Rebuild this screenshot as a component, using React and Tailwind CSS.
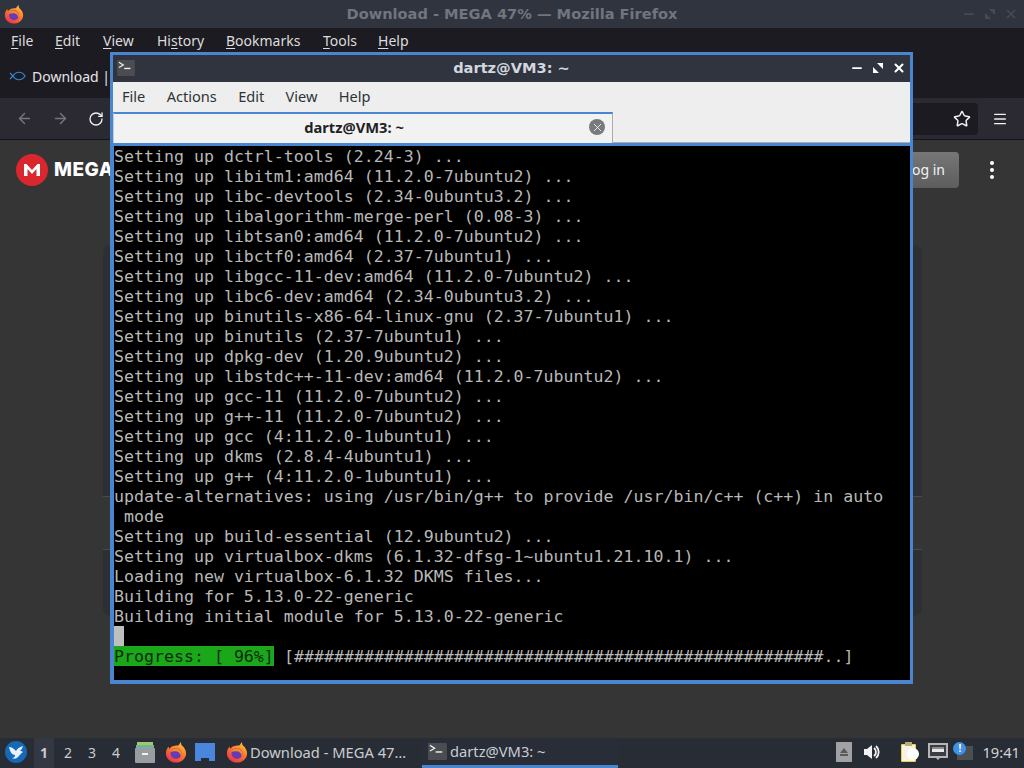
import React from "react";
import { ArrowLeft, ArrowRight, RotateCw, Star, Menu, Minus, X } from "lucide-react";

const lines = [
  "Setting up dctrl-tools (2.24-3) ...",
  "Setting up libitm1:amd64 (11.2.0-7ubuntu2) ...",
  "Setting up libc-devtools (2.34-0ubuntu3.2) ...",
  "Setting up libalgorithm-merge-perl (0.08-3) ...",
  "Setting up libtsan0:amd64 (11.2.0-7ubuntu2) ...",
  "Setting up libctf0:amd64 (2.37-7ubuntu1) ...",
  "Setting up libgcc-11-dev:amd64 (11.2.0-7ubuntu2) ...",
  "Setting up libc6-dev:amd64 (2.34-0ubuntu3.2) ...",
  "Setting up binutils-x86-64-linux-gnu (2.37-7ubuntu1) ...",
  "Setting up binutils (2.37-7ubuntu1) ...",
  "Setting up dpkg-dev (1.20.9ubuntu2) ...",
  "Setting up libstdc++-11-dev:amd64 (11.2.0-7ubuntu2) ...",
  "Setting up gcc-11 (11.2.0-7ubuntu2) ...",
  "Setting up g++-11 (11.2.0-7ubuntu2) ...",
  "Setting up gcc (4:11.2.0-1ubuntu1) ...",
  "Setting up dkms (2.8.4-4ubuntu1) ...",
  "Setting up g++ (4:11.2.0-1ubuntu1) ...",
  "update-alternatives: using /usr/bin/g++ to provide /usr/bin/c++ (c++) in auto",
  " mode",
  "Setting up build-essential (12.9ubuntu2) ...",
  "Setting up virtualbox-dkms (6.1.32-dfsg-1~ubuntu1.21.10.1) ...",
  "Loading new virtualbox-6.1.32 DKMS files...",
  "Building for 5.13.0-22-generic",
  "Building initial module for 5.13.0-22-generic",
];

function FirefoxIcon({ size = 20, id }) {
  return (
    <svg width={size} height={size} viewBox="0 0 24 24">
      <defs>
        <linearGradient id={id} x1="0.8" y1="0" x2="0.2" y2="1">
          <stop offset="0" stopColor="#ffc43a" />
          <stop offset="0.45" stopColor="#ff7a2a" />
          <stop offset="1" stopColor="#e8304f" />
        </linearGradient>
      </defs>
      <path d="M17 1c1 2 .6 3 1.5 4C21 7 23 10 23 13.500C23 19 18 23.500 12 23.500S1 19 1 13.500C1 10 2.500 7.500 4 6c0 1 .3 2 1 2.500C7 5 12 5 14 5c1.500-1 2.500-2.500 3-4z" fill={`url(#${id})`} />
      <circle cx="12" cy="13.500" r="6" fill="#6a3bb0" />
      <path d="M6 12c1-3 4-4.500 7-4 3 .5 5 3 5 6 0 1-.3 2-.8 3-.2-3-2-5.500-5.200-5.800C10 11 8 11 6 12z" fill="#f58a2d" />
    </svg>
  );
}

function TerminalIcon({ className }) {
  return (
    <svg className={className} viewBox="0 0 20 18">
      <rect width="20" height="18" rx="1" fill="#4b4d50" />
      <path d="M2 2.500l5 3-5 3" fill="none" stroke="#f2f2f2" strokeWidth="1.300" />
      <path d="M8 9.500h7" stroke="#f2f2f2" strokeWidth="1.500" />
    </svg>
  );
}

function U({ children }) {
  return <span className="underline underline-offset-2">{children}</span>;
}

function TerminalWindow() {
  return (
    <div className="absolute left-[110px] top-[52px] w-[803px] h-[632px] border-[3px] border-[#4a86cf] flex flex-col bg-black">
      <div className="h-[27px] shrink-0 bg-[#2f343f] grid grid-cols-[1fr_auto_1fr] items-center pl-[4px] pr-[4px] pb-[2px]">
        <TerminalIcon className="w-[18px] h-[16px]" />
        <span className="font-['DejaVu_Sans'] font-bold text-[14.6px] text-[#d3d7de]">dartz@VM3: ~</span>
        <div className="flex justify-end items-center gap-[7px] text-white">
          <Minus size={14} strokeWidth={3} />
          <svg width="14" height="14" viewBox="0 0 14 14">
            <path d="M6 2h6v6zM8 12H2V6z" fill="#fff" />
          </svg>
          <X size={14} strokeWidth={3.500} />
        </div>
      </div>
      <div className="h-[30px] shrink-0 bg-[#eeeeee] flex items-center font-['Noto_Sans'] text-[14.6px] text-[#2e3436] pl-[9px] gap-[21.300px]">
        <span>File</span>
        <span>Actions</span>
        <span>Edit</span>
        <span>View</span>
        <span>Help</span>
      </div>
      <div className="h-[31px] shrink-0 bg-[#eeeeee] flex items-stretch">
        <div className="w-[500px] border-t-2 border-[#4a86cf] border-r border-r-[#a9adb3] border-l border-l-[#c5ccd5] bg-[#f2f2f2] flex items-center relative justify-center pb-[3px]">
          <span className="font-['Noto_Sans'] font-bold text-[14.7px] text-[#1f2225] mr-[18px]">dartz@VM3: ~</span>
          <span className="absolute right-[7px] top-[5px] w-[16px] h-[16px] rounded-full bg-[#777b7d] flex items-center justify-center text-white">
            <X size={13} strokeWidth={1.500} />
          </span>
        </div>
        <div className="flex-1 border-b border-[#a9adb3]" />
      </div>
      <div className="flex-1 min-h-0 border-t-[3px] border-l border-b border-[#4a86cf] bg-black font-['DejaVu_Sans_Mono'] text-[16.6px] leading-[22px] text-[#b8b8b8] whitespace-pre overflow-hidden">
        {lines.map((l, i) => (
          <div key={i} className="h-[20px]">{l}</div>
        ))}
        <div className="h-[20px]">
          <span className="block w-[10px] h-[20px] bg-[#bfbfbf]" />
        </div>
        <div className="h-[20px] flex">
          <span className="w-[160px] h-[20px] bg-[#1aa81a] text-[#0a2a0a]">Progress: [ 96%]</span>
          <span>{" [#####################################################..]"}</span>
        </div>
      </div>
    </div>
  );
}

function Taskbar() {
  return (
    <div className="h-[30px] shrink-0 bg-[#282c34] flex items-center font-['Noto_Sans'] text-[14.7px] text-[#c9ccd1] relative">
      <div className="w-[32px] flex justify-center pb-[2px]">
        <svg width="24" height="24" viewBox="0 0 24 24">
          <circle cx="12" cy="12" r="11" fill="#1668b8" />
          <path d="M5 7c3 0 5 2 7 4 1-2 3-4 7-5-1 3-2 4-3 5 1 0 2 0 3 1-2 1-3 3-5 5-2 2-4 2-6 1 2 0 3-1 3-3-3 0-5-3-6-8z" fill="#e8f2fb" />
        </svg>
      </div>
      <div className="flex items-center h-[30px] ml-[2px] text-[14px]">
        <span className="w-[20px] h-[30px] pb-[2px] bg-[#343842] flex items-center justify-center font-bold">1</span>
        <span className="w-[24px] ml-[2px] pb-[2px] text-center">2</span>
        <span className="w-[24px] pb-[2px] text-center">3</span>
        <span className="w-[24px] pb-[2px] text-center">4</span>
      </div>
      <div className="ml-[6px] w-[22px] h-[22px] mb-[3px]">
        <svg width="22" height="22" viewBox="0 0 22 22">
          <rect x="3" y="1" width="16" height="4" fill="#a9c667" />
          <rect x="2" y="4" width="18" height="3" fill="#6fb3a0" />
          <rect x="1" y="7" width="20" height="15" rx="1" fill="#9a9d9f" />
          <rect x="8" y="12" width="6" height="2" fill="#f2f2f2" />
        </svg>
      </div>
      <div className="ml-[9px] pb-[2px]"><FirefoxIcon size={22} id="ffa" /></div>
      <div className="ml-[7px] pb-[2px]">
        <svg width="22" height="20" viewBox="0 0 22 20">
          <path d="M1 1h20v18h-6v-3H7v3H1z" fill="#4a86dd" />
        </svg>
      </div>
      <div className="ml-[10px] flex items-center w-[196px] pb-[2px]">
        <FirefoxIcon size={22} id="ffb" />
        <span className="ml-[2px]">Download - MEGA 47…</span>
      </div>
      <div className="w-[196px] h-[30px] flex items-center border-b-[3px] border-[#4a86cf] pl-[6px] bg-[#282d38]">
        <TerminalIcon className="w-[19px] h-[17px]" />
        <span className="ml-[3px]">dartz@VM3: ~</span>
      </div>
      <div className="flex-1 flex items-center justify-end pr-[4px] pb-[2px]">
        <div className="w-[16px] h-[20px] bg-[#a2a2a4] flex items-center justify-center">
          <svg width="10" height="8" viewBox="0 0 10 8"><path d="M5 0l4 5H1zM1 6h8v2H1z" fill="#5a5a5a" /></svg>
        </div>
        <svg className="ml-[11px]" width="18" height="18" viewBox="0 0 18 18">
          <path d="M1 6h3l5-4v14l-5-4H1z" fill="#f2f2f2" />
          <path d="M11 5a5 5 0 010 8M13 3a8 8 0 010 12" fill="none" stroke="#f2f2f2" strokeWidth="1.800" />
        </svg>
        <svg className="ml-[19px]" width="20" height="22" viewBox="0 0 20 22">
          <rect x="1" y="3" width="15" height="18" rx="1" fill="#e8cf58" />
          <rect x="2" y="4" width="13" height="16" fill="#f7f3df" />
          <rect x="5" y="1" width="7" height="4" fill="#b9ad7c" />
          <circle cx="13" cy="13" r="6" fill="#ffffff" />
        </svg>
        <svg className="ml-[8px]" width="20" height="20" viewBox="0 0 20 20">
          <rect x="1" y="2" width="18" height="13" fill="#3a3d42" stroke="#b5b5b5" strokeWidth="2" />
          <path d="M7 15l3 3 3-3z" fill="#b5b5b5" />
          <path d="M4 5h12v5H4z" fill="#e6e6e6" />
          <path d="M5 5v2M7 5v2M9 5v2M11 5v2M13 5v2M15 5v2" stroke="#333" strokeWidth="1" />
        </svg>
        <div className="ml-[5px] relative w-[20px] h-[20px]">
          <div className="absolute right-0 bottom-[2px] w-[16px] h-[14px] bg-[#4a4f52]" />
          <div className="absolute left-0 top-0 w-[13px] h-[13px] rounded-full bg-[#3f92e6] flex items-center justify-center text-white text-[10px] font-bold leading-none">!</div>
        </div>
        <span className="ml-[9px] text-[#d0d3d8]">19:41</span>
      </div>
    </div>
  );
}

export default function App() {
  return (
    <div className="w-[1024px] h-[768px] relative overflow-hidden flex flex-col bg-[#353535]">
      <div className="h-[28px] shrink-0 bg-[#2f343f] grid grid-cols-[1fr_auto_1fr] items-center px-[4px]">
        <FirefoxIcon size={20} id="fft" />
        <span className="font-['DejaVu_Sans'] font-bold text-[14.6px] text-[#70757f]">Download - MEGA 47% — Mozilla Firefox</span>
        <div className="flex justify-end items-center gap-[7px] text-[#454a55] pr-[2px]">
          <Minus size={14} strokeWidth={3} />
          <svg width="14" height="14" viewBox="0 0 14 14"><path d="M6 2h6v6zM8 12H2V6z" fill="#454a55" /></svg>
          <X size={14} strokeWidth={3} />
        </div>
      </div>
      <div className="h-[26px] shrink-0 bg-[#1c1b22] flex items-center font-['Noto_Sans'] text-[14px] text-[#dcdcde] pl-[11px] pb-[2px]">
        <span className="w-[44px]"><U>F</U>ile</span>
        <span className="w-[48px]"><U>E</U>dit</span>
        <span className="w-[54px]"><U>V</U>iew</span>
        <span className="w-[69px]">Hi<U>s</U>tory</span>
        <span className="w-[97px]"><U>B</U>ookmarks</span>
        <span className="w-[55px]"><U>T</U>ools</span>
        <span><U>H</U>elp</span>
      </div>
      <div className="h-[44px] shrink-0 bg-[#1c1b22] flex items-center pl-[9px] font-['Noto_Sans'] text-[14px] text-[#e6e6e8]">
        <svg width="17" height="10" viewBox="0 0 17 10">
          <path d="M1 2l3 3-3 3M4 5c3-5 9-5 12 0-3 5-9 5-12 0z" fill="none" stroke="#3a86cf" strokeWidth="1.200" />
        </svg>
        <span className="ml-[6px]">Download |</span>
      </div>
      <div className="h-[42px] shrink-0 bg-[#2b2a33] border-b border-[#15141a] flex items-center pl-[16px] pr-[16px] text-[#f2f2f2]">
        <ArrowLeft size={17} className="text-[#77767d]" />
        <ArrowRight size={17} className="ml-[19px] text-[#77767d]" />
        <RotateCw size={16} className="ml-[19px]" />
        <div className="flex-1 ml-[12px] h-[32px] bg-[#1c1b22] rounded-[4px] flex items-center justify-end pr-[7px]">
          <Star size={18} />
        </div>
        <Menu size={16} className="ml-[14px]" />
      </div>
      <div className="flex-1 min-h-0 pt-[12px]">
        <div className="flex items-center justify-between h-[36px] pl-[16px] pr-[30px]">
          <div className="flex items-center">
            <svg width="32" height="32" viewBox="0 0 32 32">
              <circle cx="16" cy="16" r="16" fill="#d9272e" />
              <path d="M8 22V10h2.500L16 16l5.500-6H24v12h-3.500v-7L16 20l-4.500-5v7z" fill="#fff" />
            </svg>
            <span className="ml-[6px] font-['Inter'] font-extrabold text-[19px] text-white tracking-[0.5px]">MEGA</span>
          </div>
          <div className="flex items-center">
            <div className="w-[76px] h-[36px] rounded-[4px] bg-gradient-to-b from-[#777777] to-[#5d5d5d] flex items-center justify-end pr-[14px] pb-[2px] font-['Noto_Sans'] text-[14px] text-[#f2f2f2]">Log in</div>
            <div className="ml-[31px] flex flex-col gap-[3px]">
              <span className="w-[4px] h-[4px] rounded-full bg-white" />
              <span className="w-[4px] h-[4px] rounded-full bg-white" />
              <span className="w-[4px] h-[4px] rounded-full bg-white" />
            </div>
          </div>
        </div>
        <div className="w-[819px] mx-auto mt-[57px] flex flex-col">
          <div className="h-[251px] rounded-t-[8px] bg-[#2d2f33]" />
          <div className="h-[54px] border-y border-[#4a4a4a]" />
          <div className="h-[66px] rounded-b-[8px] bg-[#2d2f33]" />
        </div>
      </div>
      <Taskbar />
      <TerminalWindow />
    </div>
  );
}
